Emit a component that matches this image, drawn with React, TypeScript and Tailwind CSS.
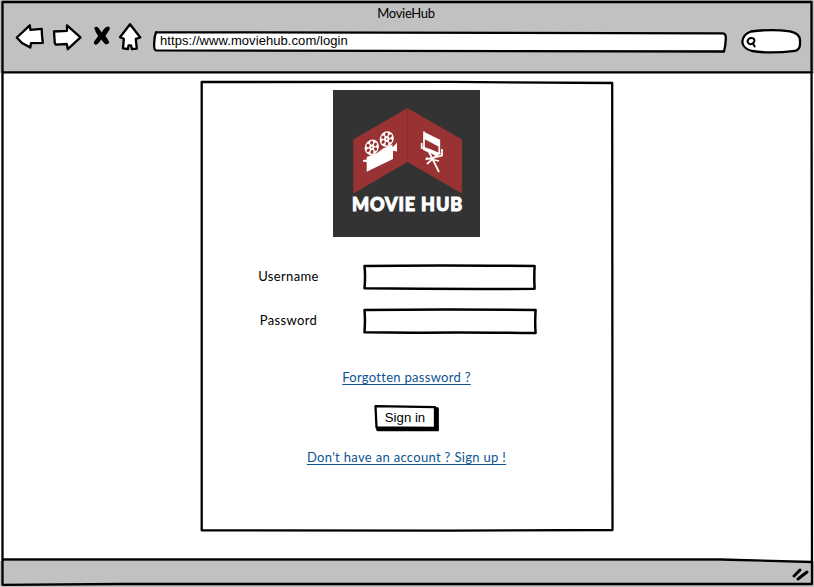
import type { ReactNode } from "react";

const ink = { fill: "none", stroke: "#000", strokeWidth: 2.3, strokeLinejoin: "round" as const, strokeLinecap: "round" as const };

function Sketch({ w, h, children }: { w: number; h: number; children: ReactNode }) {
  return (
    <svg className="pointer-events-none absolute inset-0 overflow-visible" width={w} height={h} viewBox={`0 0 ${w} ${h}`} {...ink}>
      {children}
    </svg>
  );
}

function NavIcons() {
  return (
    <div className="flex h-[30px] items-start text-black">
      <svg width="30" height="30" viewBox="15 22 30 30" {...ink} fill="#fff">
        <path d="M16.8 37.5 L29.8 25.3 L30.4 29.8 L41.8 28.8 Q41.6 33 42.8 42.8 L31 43.2 L30.3 47.6 L22 43 Z" />
      </svg>
      <svg className="ml-[7px]" width="31" height="30" viewBox="52 22 31 30" {...ink} fill="#fff">
        <path d="M54 31.5 Q60 31.2 67 30.8 L67 25.3 L80.5 37.3 L67.8 49.2 L66.8 44 L56 44.6 Q54.4 44 54.6 40 Z" />
      </svg>
      <svg className="ml-[9px]" width="19" height="30" viewBox="92 22 19 30" fill="#000">
        <path d="M94.2 27.8 Q97 25 99.3 29 L101.8 32.6 Q104.5 27.2 108 26.6 Q110.8 27.2 109.3 30 L105.4 36 Q108.5 39.5 109.3 42.6 Q107.5 45.6 104.5 43.4 L101.2 39.4 Q98 44.5 95.3 44.8 Q92.8 43.6 94.5 41 L98.2 36 Q95 31.5 94.2 27.8 Z" />
      </svg>
      <svg className="ml-[7px]" width="26" height="30" viewBox="118 22 26 30" {...ink} fill="#fff">
        <path d="M130 24.2 L120 37.2 L123.8 38.8 L123 48.3 L128 49 L128.6 45.3 L131 45.3 L132 49.2 L136.8 48.6 L135.8 38.8 L140.3 37.5 Z" />
      </svg>
    </div>
  );
}

function Reel({ x, y }: { x: number; y: number }) {
  return (
    <g transform={`translate(${x} ${y}) rotate(24) scale(.86 1)`}>
      <circle r="8" fill="#fff" />
      {[0, 60, 120, 180, 240, 300].map((a) => (
        <ellipse key={a} cx="4.8" cy="0" rx="1.9" ry="1.7" fill="#993333" transform={`rotate(${a})`} />
      ))}
      <circle r=".9" fill="#993333" />
    </g>
  );
}

function Logo() {
  return (
    <div className="relative mr-px flex h-[147px] w-[147px] shrink-0 flex-col items-center bg-[#333]">
      <svg className="absolute inset-0" width="147" height="147" viewBox="0 0 147 147">
        <path d="M20.3 49.5 L74.5 18 L129 49.5 V103.5 L74.5 72 L20.3 103.5 Z" fill="#993333" />
        <path d="M74.5 18 V72" stroke="#772b2b" strokeWidth=".7" />
        <Reel x={38.8} y={57.3} />
        <Reel x={53.7} y={49} />
        <path d="M33.7 67 L44 63 L50 58.5 L59.5 54.5 V57.5 L64 52.5 V61.5 L60 60.8 V69 L33.7 81.7 V72 L30 71.8 V70 L33.7 69.6 Z" fill="#fff" />
        <path d="M91.3 42 L106.3 49.5 V57 L91.3 49 Z" fill="#fff" />
        <path d="M89.5 56.5 L97 59 L108.5 63.8 L103 65.8 L90 60 Z" fill="#fff" />
        <path d="M91 41.5 V58 M106.3 49.5 V64 M88.7 53 V59 M109 59 V65.5 L92.5 69.5 M95 60 L106 82 M94 74 L105 64 M93 68 L106 71" fill="none" stroke="#fff" strokeWidth="1.7" />
      </svg>
      <span className="relative mt-[104px] pl-[2px] whitespace-nowrap font-[Lato] text-[18px] font-black leading-[20px] tracking-[0.85px] text-white [-webkit-text-stroke:1px_#fff]">MOVIE HUB</span>
    </div>
  );
}

function Field({ label, wide }: { label: string; wide?: boolean }) {
  return (
    <label className="flex h-[27px] items-center">
      <span className="w-[63px] shrink-0 pb-[3px] text-center tracking-[0.35px]">{label}</span>
      <span className="relative ml-[43px] h-[27px] w-[173px]">
        <Sketch w={173} h={27}>
          <path d={wide ? "M1.5 2 Q80 1.2 172.6 2 Q171.8 15 172.6 25 Q90 24 50 24.8 L1.5 24.3 Q2.4 12 1.5 2" : "M1.5 2 Q70 1 171.6 2 Q171 14 171.6 24.8 Q80 25.2 1.5 24.3 Q2.6 12 1.5 2"} strokeWidth="2.5" />
        </Sketch>
        <input aria-label={label} className="absolute inset-[4px] bg-transparent outline-none" />
      </span>
    </label>
  );
}

export default function App() {
  return (
    <div className="relative flex h-[587px] w-[814px] flex-col overflow-hidden bg-white font-['Liberation_Sans',Arial,sans-serif] text-[13px] leading-[16px] text-black">
      <header className="h-[73px] shrink-0 bg-[#c1c1c1] pt-[5px]">
        <h1 className="pr-[2px] text-center font-[Lato] text-[13px] tracking-[-0.3px]">MovieHub</h1>
        <div className="mt-px flex h-[32px] pl-[15px]">
          <NavIcons />
          <div className="relative mt-[9px] ml-[9px] flex h-[22px] w-[573px] items-center pl-[7px]">
            <Sketch w={573} h={22}>
              <path d="M3 1.2 Q300 .6 569.5 2.4 Q573.5 2.5 572.7 9 Q572.5 15 571 20.5 L3 19.4 Q.8 19 1.2 12 Q1.2 6 3 1.2" fill="#fff" />
            </Sketch>
            <span className="relative pb-[2px] tracking-[0.07px]">https://www.moviehub.com/login</span>
          </div>
          <div className="relative mt-[7px] ml-[15px] h-[26px] w-[61px]">
            <Sketch w={61} h={26}>
              <path d="M10 2.5 Q30 -.3 49 2.3 Q60 4.5 59 13 Q59.5 21 54 21.8 Q30 25 11 22 Q2 19.5 1.3 13 Q2 5 10 2.5" fill="#fff" />
              <path d="M8.5 9.3 Q13.5 8 13.5 12 Q12 15.8 8.5 15 Q4.5 13 8.5 9.3 M12.2 15 L13.7 17.5" strokeWidth="2" />
            </Sketch>
          </div>
        </div>
      </header>
      <main className="flex flex-1 justify-center pt-[8px]">
        <section className="relative flex h-[451px] w-[414px] flex-col items-center pt-[9px]">
          <Sketch w={414} h={451}>
            <path d="M1.7 1 L250 .9 L412.2 2 Q411.5 200 412.5 449 L250 449.6 L1.7 449.3 Q1 200 1.7 1" />
          </Sketch>
          <Logo />
          <form className="mt-[27px] flex w-[300px] flex-col gap-[17px] font-[Lato]">
            <Field label="Username" />
            <Field label="Password" wide />
          </form>
          <a href="#" className="mt-[34px] mr-px font-[Lato] tracking-[0.29px] text-[#0b5394] underline underline-offset-2">Forgotten password ?</a>
          <button className="relative mt-[20px] mr-[2px] h-[27px] w-[65px] pr-[2px] pb-[2px]">
            <Sketch w={65} h={27}>
              <path d="M4 24.3 H63 V4" strokeWidth="3.8" strokeLinejoin="miter" />
              <path d="M1.5 1.2 L61 2.2 L61 23 L2.5 22.5 Z" fill="#fff" />
            </Sketch>
            <span className="relative text-[13.2px]">Sign in</span>
          </button>
          <a href="#" className="mt-[17px] mr-px font-[Lato] tracking-[0.32px] text-[#0b5394] underline underline-offset-2">Don't have an account ? Sign up !</a>
        </section>
      </main>
      <footer className="h-[26px] shrink-0 bg-[#c1c1c1]" />
      <Sketch w={814} h={587}>
        <path d="M2.5 2 H811.5 L812 584 L120 584 L2.5 584.8 Z M3 72.4 L812 72.4 M3 559.5 L720 559.5 L812 562" />
        <path d="M794 576 L800 570 M798 579 L807 572" strokeWidth="3" />
      </Sketch>
    </div>
  );
}
